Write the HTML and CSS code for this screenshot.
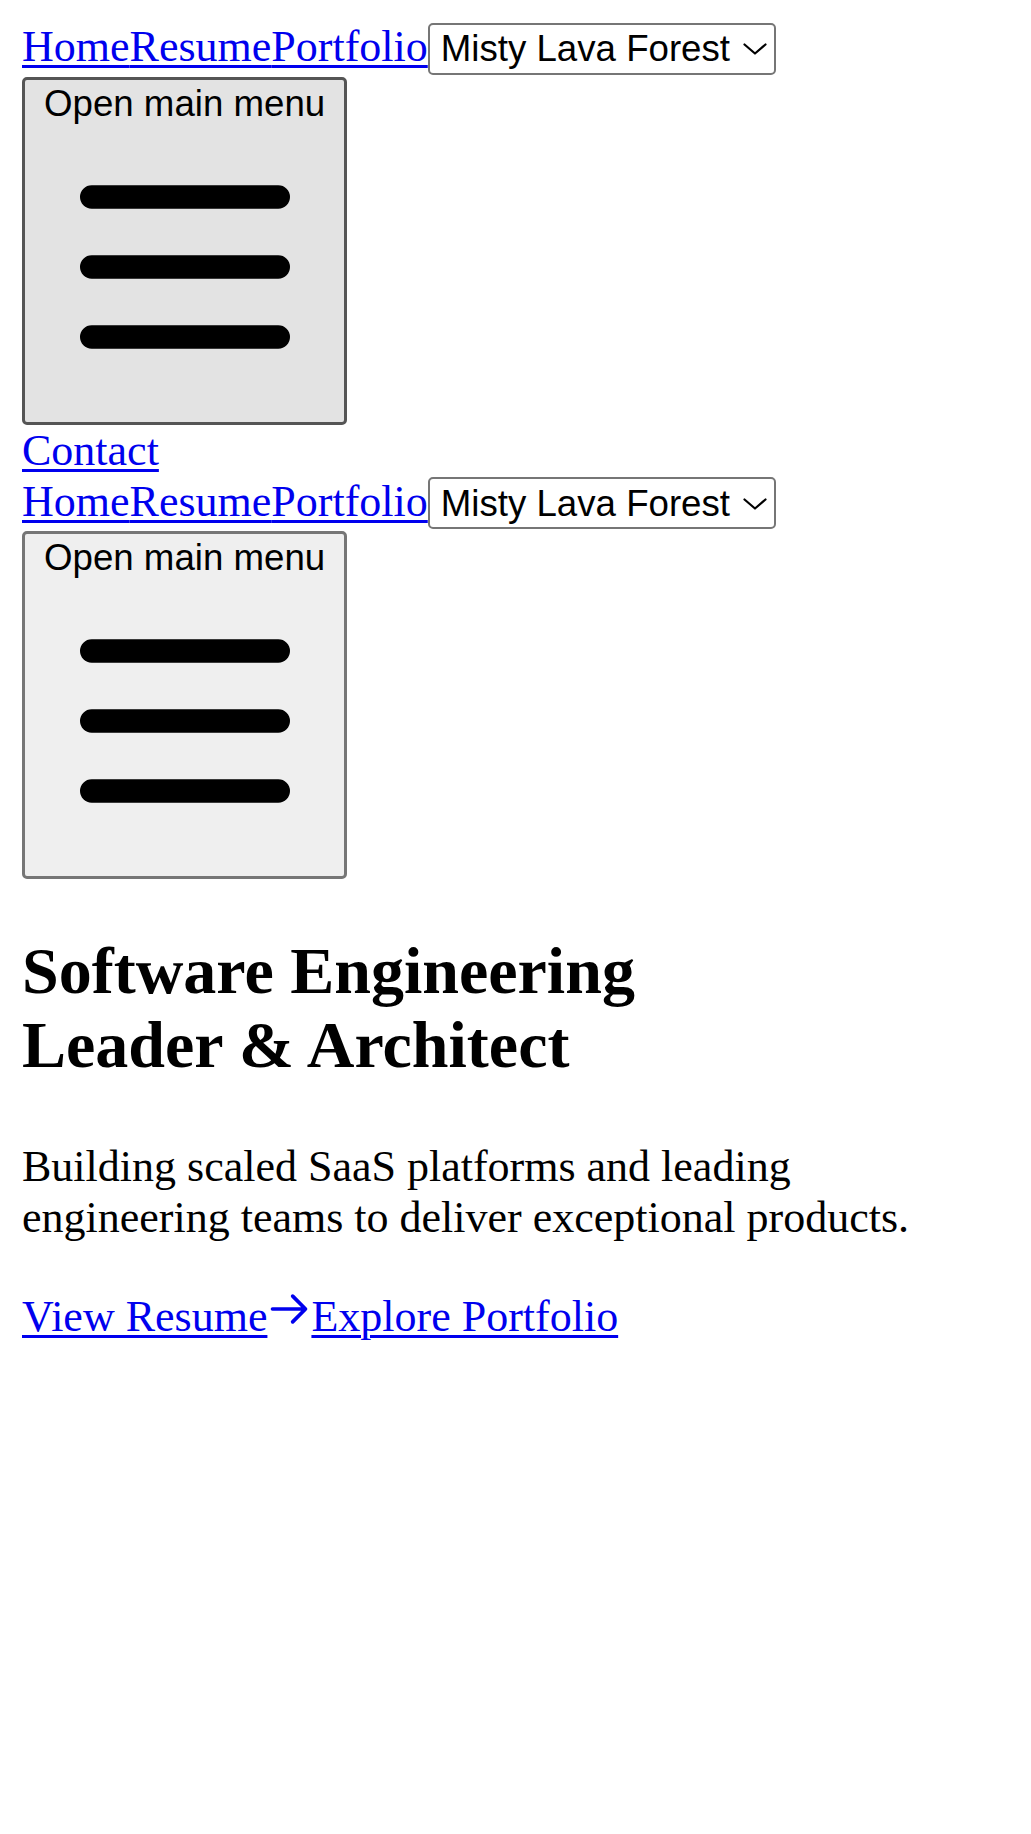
FILE: index.html
```html
<!DOCTYPE html>
<html lang="en">
<head>
<meta charset="utf-8">
<title>Software Engineering Leader &amp; Architect</title>
<link rel="stylesheet" href="styles.css">
</head>
<body>
<header class="site-header">
  <nav class="nav">
    <div class="nav-row"><a class="link" href="#">Home</a><a class="link" href="#">Resume</a><a class="link" href="#">Portfolio</a><span class="theme-picker"><select class="theme-select" aria-label="Theme"><option>Misty Lava Forest</option></select><svg class="chevron" viewBox="0 0 24 12" fill="none" stroke="currentColor" stroke-width="2.2" stroke-linecap="round" stroke-linejoin="round"><polyline points="1.5,1.5 12,10.5 22.5,1.5"/></svg></span></div>
    <button class="menu-btn menu-btn--hover" type="button"><span class="menu-label">Open main menu</span><svg class="menu-icon" viewBox="0 0 24 24" fill="none" stroke="currentColor" stroke-width="2" stroke-linecap="round" stroke-linejoin="round"><path d="M4 6h16M4 12h16M4 18h16"/></svg></button>
    <div class="nav-extra"><a class="link" href="#">Contact</a></div>
  </nav>
  <nav class="nav nav--mobile">
    <div class="nav-row"><a class="link" href="#">Home</a><a class="link" href="#">Resume</a><a class="link" href="#">Portfolio</a><span class="theme-picker"><select class="theme-select" aria-label="Theme"><option>Misty Lava Forest</option></select><svg class="chevron" viewBox="0 0 24 12" fill="none" stroke="currentColor" stroke-width="2.2" stroke-linecap="round" stroke-linejoin="round"><polyline points="1.5,1.5 12,10.5 22.5,1.5"/></svg></span></div>
    <button class="menu-btn" type="button"><span class="menu-label">Open main menu</span><svg class="menu-icon" viewBox="0 0 24 24" fill="none" stroke="currentColor" stroke-width="2" stroke-linecap="round" stroke-linejoin="round"><path d="M4 6h16M4 12h16M4 18h16"/></svg></button>
  </nav>
</header>
<main>
  <section class="hero">
    <h1 class="hero-title">Software Engineering<br>Leader &amp; Architect</h1>
    <p class="hero-text">Building scaled SaaS platforms and leading engineering teams to deliver exceptional products.</p>
    <div class="hero-actions"><a class="link" href="#">View Resume<svg class="arrow" viewBox="0 0 24 24" fill="none" stroke="currentColor" stroke-width="2" stroke-linecap="round" stroke-linejoin="round"><path d="M14 5l7 7m0 0l-7 7m7-7H3"/></svg></a><a class="link" href="#">Explore Portfolio</a></div>
  </section>
</main>
</body>
</html>
```

FILE: styles.css
```css
html {
  background: #ffffff;
}

body {
  margin: 22px;
  font-family: "Liberation Serif", "Times New Roman", serif;
  font-size: 44px;
  line-height: 1.12;
  color: #000000;
}

.link {
  color: #0000ee;
  text-decoration: underline;
  text-decoration-thickness: 3px;
  text-underline-offset: 3.5px;
}

.nav-row {
  white-space: nowrap;
}

.theme-picker {
  position: relative;
  display: inline-block;
}

.theme-select {
  -webkit-appearance: none;
  appearance: none;
  box-sizing: border-box;
  width: 348px;
  height: 52px;
  margin: 0 0 2px;
  padding: 0 40px 0 11px;
  border: 2px solid #767676;
  border-radius: 5px;
  background: #ffffff;
  color: #000000;
  font-family: "Liberation Sans", Arial, sans-serif;
  font-size: 36.67px;
  line-height: normal;
  vertical-align: baseline;
}

.chevron {
  position: absolute;
  top: 21px;
  left: 315px;
  width: 24px;
  height: 12px;
  color: #000000;
  pointer-events: none;
}

.menu-btn {
  display: block;
  box-sizing: border-box;
  width: max-content;
  margin: 0;
  padding: 3px 19px;
  border: 3px solid #767676;
  border-radius: 5px;
  background: #efefef;
  color: #000000;
  font-family: "Liberation Sans", Arial, sans-serif;
  font-size: 36.67px;
  line-height: normal;
  text-align: center;
}

.menu-btn--hover {
  background: #e3e3e3;
  border-color: #555555;
}

.menu-label {
  display: block;
}

.menu-icon {
  display: block;
  width: 280px;
  height: 280px;
  margin: 2px auto 12px;
}

.nav-extra {
  padding-top: 1px;
}

.nav--mobile {
  padding-top: 2px;
}

.hero-title {
  max-width: 700px;
  margin: 55px 0 59px;
  font-size: 66px;
  font-weight: bold;
  line-height: 74px;
}

.hero-text {
  max-width: 960px;
  margin: 44px 0;
  line-height: normal;
}

.hero-actions {
  white-space: nowrap;
}

.arrow {
  width: 44px;
  height: 44px;
  vertical-align: baseline;
}
```
